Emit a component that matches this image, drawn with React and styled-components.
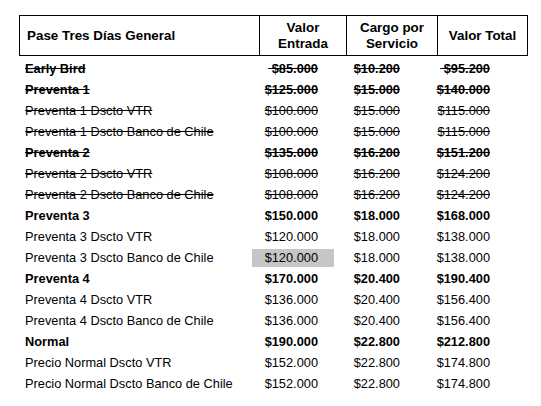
import styled, { createGlobalStyle } from 'styled-components';

const GlobalStyle = createGlobalStyle`
  body {
    margin: 0;
    background: #fff;
    font-family: "Liberation Sans", Arial, sans-serif;
    color: #000;
  }
`;

const Page = styled.div`
  width: 541px;
  height: 406px;
  padding: 15px 0 0 19px;
  box-sizing: border-box;
`;

const HeaderTable = styled.div`
  display: grid;
  grid-template-columns: 239px 87px 91px 90px;
  width: 509px;
  height: 41px;
  box-sizing: border-box;
  border: 1px solid #000;
`;

const HeadCell = styled.div`
  display: flex;
  align-items: center;
  justify-content: ${props => props.first ? 'flex-start' : 'center'};
  padding-left: ${props => props.first ? '7px' : '0'};
  border-left: ${props => props.first ? 'none' : '1px solid #000'};
  font-size: 13.4px;
  font-weight: 700;
  line-height: 16px;
  text-align: center;
`;

const DataTable = styled.div`
  margin-top: 2px;
  display: flex;
  flex-direction: column;
`;

const Row = styled.div`
  display: grid;
  grid-template-columns: 233px 82px 82px 90px;
  height: 21px;
  align-items: center;
  font-size: 12.8px;
  font-weight: ${props => props.bold ? 700 : 400};
  text-decoration: ${props => props.struck ? 'line-through' : 'none'};
`;

const NameCell = styled.div`
  padding-left: 6px;
  white-space: nowrap;
`;

const PriceCell = styled.div`
  height: 18px;
  line-height: 18px;
  text-align: right;
  padding-right: 16px;
  white-space: pre;
  background: ${props => props.highlight ? '#c6c6c6' : 'transparent'};
`;

const rows = [
  { name: 'Early Bird', vals: [' $85.000', '$10.200', ' $95.200'], bold: true, struck: true },
  { name: 'Preventa 1', vals: ['$125.000', '$15.000', '$140.000'], bold: true, struck: true },
  { name: 'Preventa 1 Dscto VTR', vals: ['$100.000', '$15.000', '$115.000'], struck: true },
  { name: 'Preventa 1 Dscto Banco de Chile', vals: ['$100.000', '$15.000', '$115.000'], struck: true },
  { name: 'Preventa 2', vals: ['$135.000', '$16.200', '$151.200'], bold: true, struck: true },
  { name: 'Preventa 2 Dscto VTR', vals: ['$108.000', '$16.200', '$124.200'], struck: true },
  { name: 'Preventa 2 Dscto Banco de Chile', vals: ['$108.000', '$16.200', '$124.200'], struck: true },
  { name: 'Preventa 3', vals: ['$150.000', '$18.000', '$168.000'], bold: true },
  { name: 'Preventa 3 Dscto VTR', vals: ['$120.000', '$18.000', '$138.000'] },
  { name: 'Preventa 3 Dscto Banco de Chile', vals: ['$120.000', '$18.000', '$138.000'], highlight: 0 },
  { name: 'Preventa 4', vals: ['$170.000', '$20.400', '$190.400'], bold: true },
  { name: 'Preventa 4 Dscto VTR', vals: ['$136.000', '$20.400', '$156.400'] },
  { name: 'Preventa 4 Dscto Banco de Chile', vals: ['$136.000', '$20.400', '$156.400'] },
  { name: 'Normal', vals: ['$190.000', '$22.800', '$212.800'], bold: true },
  { name: 'Precio Normal Dscto VTR', vals: ['$152.000', '$22.800', '$174.800'] },
  { name: 'Precio Normal Dscto Banco de Chile', vals: ['$152.000', '$22.800', '$174.800'] },
];

export default function App() {
  return (
    <Page>
      <GlobalStyle />
      <HeaderTable>
        <HeadCell first>Pase Tres Días General</HeadCell>
        <HeadCell>Valor<br />Entrada</HeadCell>
        <HeadCell>Cargo por<br />Servicio</HeadCell>
        <HeadCell>Valor Total</HeadCell>
      </HeaderTable>
      <DataTable>
        {rows.map((row, i) => (
          <Row key={i} bold={row.bold} struck={row.struck}>
            <NameCell>{row.name}</NameCell>
            {row.vals.map((v, j) => (
              <PriceCell key={j} highlight={row.highlight === j}>{v}</PriceCell>
            ))}
          </Row>
        ))}
      </DataTable>
    </Page>
  );
}
